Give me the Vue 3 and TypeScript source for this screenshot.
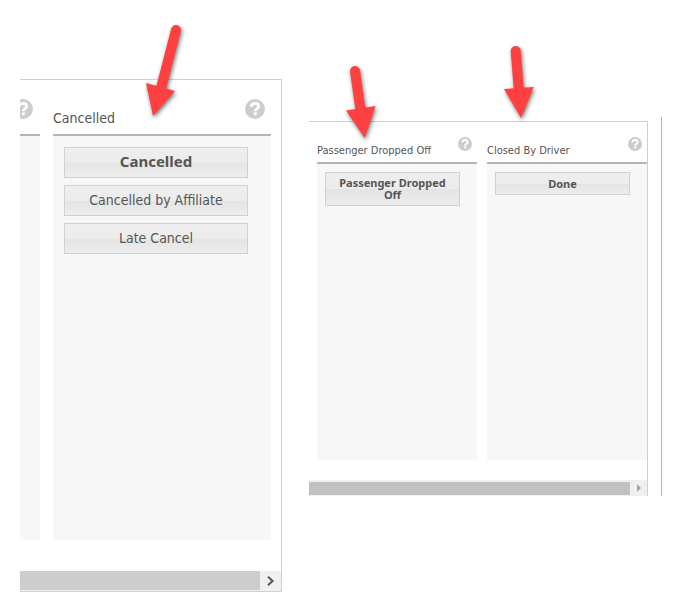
<script setup lang="ts">
interface Arrow {
  name: string
  viewBox: string
  width: number
  height: number
  shaft: string
  head: string
}

interface Column {
  title: string
  actions: { label: string; strong: boolean }[]
  arrow: Arrow
}

const cancelled: Column = {
  title: 'Cancelled',
  actions: [
    { label: 'Cancelled', strong: true },
    { label: 'Cancelled by Affiliate', strong: false },
    { label: 'Late Cancel', strong: false },
  ],
  arrow: {
    name: 'arrow-cancelled',
    viewBox: '140 20 50 110',
    width: 50,
    height: 110,
    shaft: 'M176 30L161 88',
    head: 'M146 83L175 91L153 116Z',
  },
}

const closing: Column[] = [
  {
    title: 'Passenger Dropped Off',
    actions: [{ label: 'Passenger Dropped Off', strong: true }],
    arrow: {
      name: 'arrow-dropped',
      viewBox: '340 60 50 90',
      width: 50,
      height: 90,
      shaft: 'M355 71L360.5 110',
      head: 'M346 110.5L375.5 106L364.7 138Z',
    },
  },
  {
    title: 'Closed By Driver',
    actions: [{ label: 'Done', strong: true }],
    arrow: {
      name: 'arrow-closed',
      viewBox: '498 40 50 90',
      width: 50,
      height: 90,
      shaft: 'M515.7 51L518.8 90',
      head: 'M504 89L533.7 87L521 118Z',
    },
  },
]
</script>

<template>
  <main class="page">
    <section class="panel large">
      <div class="columns">
        <div class="column cut">
          <header class="head">
            <svg class="help" viewBox="0 0 20 20" aria-hidden="true">
              <circle cx="10" cy="10" r="10" />
              <path d="M6.4 7.8C6.4 5.5 7.9 4.4 10.1 4.4S13.7 5.6 13.7 7.4C13.7 9.7 10.2 9.6 10.2 12.2" />
              <rect x="8.8" y="13.4" width="3" height="2.8" />
            </svg>
          </header>
          <div class="body"></div>
        </div>
        <div class="column">
          <header class="head">
            <h2 class="title">{{ cancelled.title }}</h2>
            <svg class="help" viewBox="0 0 20 20" role="img" aria-label="Help">
              <circle cx="10" cy="10" r="10" />
              <path d="M6.4 7.8C6.4 5.5 7.9 4.4 10.1 4.4S13.7 5.6 13.7 7.4C13.7 9.7 10.2 9.6 10.2 12.2" />
              <rect x="8.8" y="13.4" width="3" height="2.8" />
            </svg>
          </header>
          <div class="body">
            <button
              v-for="action in cancelled.actions"
              :key="action.label"
              type="button"
              class="action"
              :class="{ strong: action.strong }"
            >{{ action.label }}</button>
          </div>
          <svg
            class="arrow"
            :class="cancelled.arrow.name"
            :viewBox="cancelled.arrow.viewBox"
            :width="cancelled.arrow.width"
            :height="cancelled.arrow.height"
            aria-hidden="true"
          >
            <path class="shaft" :d="cancelled.arrow.shaft" />
            <path class="point" :d="cancelled.arrow.head" />
          </svg>
        </div>
      </div>
      <div class="scrollbar">
        <div class="thumb"></div>
        <button type="button" class="step" aria-label="Scroll right">
          <svg width="8" height="10" viewBox="0 0 8 10" aria-hidden="true">
            <path class="chevron" d="M1 0.8L5.6 5L1 9.2" />
          </svg>
        </button>
      </div>
    </section>

    <section class="panel small">
      <div class="columns">
        <div v-for="column in closing" :key="column.title" class="column">
          <header class="head">
            <h2 class="title">{{ column.title }}</h2>
            <svg class="help" viewBox="0 0 20 20" role="img" aria-label="Help">
              <circle cx="10" cy="10" r="10" />
              <path d="M6.4 7.8C6.4 5.5 7.9 4.4 10.1 4.4S13.7 5.6 13.7 7.4C13.7 9.7 10.2 9.6 10.2 12.2" />
              <rect x="8.8" y="13.4" width="3" height="2.8" />
            </svg>
          </header>
          <div class="body">
            <button
              v-for="action in column.actions"
              :key="action.label"
              type="button"
              class="action"
              :class="{ strong: action.strong }"
            >{{ action.label }}</button>
          </div>
          <svg
            class="arrow"
            :class="column.arrow.name"
            :viewBox="column.arrow.viewBox"
            :width="column.arrow.width"
            :height="column.arrow.height"
            aria-hidden="true"
          >
            <path class="shaft" :d="column.arrow.shaft" />
            <path class="point" :d="column.arrow.head" />
          </svg>
        </div>
      </div>
      <div class="scrollbar">
        <div class="thumb"></div>
        <button type="button" class="step" aria-label="Scroll right">
          <svg width="4" height="8" viewBox="0 0 4 8" aria-hidden="true">
            <path class="triangle" d="M0 0L4 4L0 8Z" />
          </svg>
        </button>
      </div>
    </section>
  </main>
</template>

<style>
body {
  background: #fff;
}
</style>

<style scoped>
.page {
  display: grid;
  grid-template-columns: 262fr 353fr;
  align-items: start;
  column-gap: 27px;
  padding: 79px 27px 21px 20px;
  font-family: Tahoma, "DejaVu Sans Condensed", "Noto Sans", sans-serif;
  color: #555;
}

.panel {
  border: 0 solid #d0d0d0;
}

.large {
  border-width: 1px 1px 1px 0;
  font-size: 14px;
  line-height: 18px;
}

.small {
  position: relative;
  margin: 42px 14px 0 0;
  border-width: 1px 1px 0 0;
  font-size: 11px;
  line-height: 13px;
}

.small::after {
  content: "";
  position: absolute;
  top: -5px;
  bottom: 0;
  right: -15px;
  width: 1px;
  background: #b5b5b5;
}

.columns {
  display: flex;
}

.large .columns {
  gap: 13px;
  padding: 0 10px 31px 0;
}

.small .columns {
  gap: 10px;
  padding: 0 0 20px 8px;
}

.column {
  position: relative;
  flex: 1 1 0;
  min-width: 0;
}

.cut {
  flex: 0 0 20px;
  overflow: hidden;
}

.head {
  display: flex;
  justify-content: space-between;
  align-items: flex-end;
  box-sizing: border-box;
  border-bottom: 2px solid #b5b5b5;
}

.large .head {
  height: 56px;
  padding: 0 6px 7px 0;
}

.small .head {
  height: 42px;
  padding: 0 5px 5px 0;
}

.large .cut .head {
  justify-content: flex-end;
  padding-right: 7px;
}

.title {
  margin: 0;
  font-size: inherit;
  font-weight: 400;
  white-space: nowrap;
}

.help {
  flex: none;
  fill: #ccc;
}

.help path {
  fill: none;
  stroke: #fff;
  stroke-width: 2.8;
}

.help rect {
  fill: #fff;
}

.large .help {
  width: 20px;
  height: 20px;
  margin-bottom: 8px;
}

.small .help {
  width: 14px;
  height: 14px;
  margin-bottom: 6px;
}

.body {
  display: flex;
  flex-direction: column;
  box-sizing: border-box;
  background: #f7f7f7;
}

.large .body {
  gap: 7px;
  min-height: 404px;
  padding: 11px 23px 11px 11px;
}

.small .body {
  min-height: 296px;
  padding: 8px 17px 8px 8px;
}

.action {
  border: 1px solid #d0d0d0;
  background: linear-gradient(#eee 0%, #ececec 50%, #e4e4e4 51%, #ededed 100%);
  color: #555;
  font: inherit;
}

.large .action {
  padding: 5px 8px 6px;
}

.small .action {
  min-height: 23px;
  padding: 4px 8px;
  line-height: 12px;
}

.action.strong {
  font-family: Tahoma, "Noto Sans", sans-serif;
  font-weight: 700;
}

.large .strong {
  padding: 4px 8px 7px;
  font-size: 15px;
}

.scrollbar {
  display: flex;
  background: #f0f0f0;
}

.large .scrollbar {
  height: 20px;
}

.small .scrollbar {
  height: 16px;
}

.thumb {
  flex: 1;
}

.large .thumb {
  margin-bottom: 1px;
  background: #cdcdcd;
}

.small .thumb {
  margin: 2px 0 1px;
  background: #c1c1c1;
}

.step {
  display: grid;
  place-items: center;
  border: 0;
  padding: 0;
  background: none;
}

.large .step {
  width: 21px;
}

.small .step {
  width: 17px;
}

.chevron {
  fill: none;
  stroke: #555;
  stroke-width: 2;
}

.triangle {
  fill: #a3a3a3;
}

.arrow {
  position: absolute;
  pointer-events: none;
  overflow: visible;
  filter: drop-shadow(1px 2px 2px rgba(0, 0, 0, 0.55));
}

.arrow-cancelled {
  left: 87px;
  top: -60px;
}

.arrow-dropped {
  left: 23px;
  top: -62px;
}

.arrow-closed {
  left: 11px;
  top: -82px;
}

.shaft {
  fill: none;
  stroke: #ff4040;
  stroke-width: 10;
  stroke-linecap: round;
}

.point {
  fill: #ff4040;
}
</style>
